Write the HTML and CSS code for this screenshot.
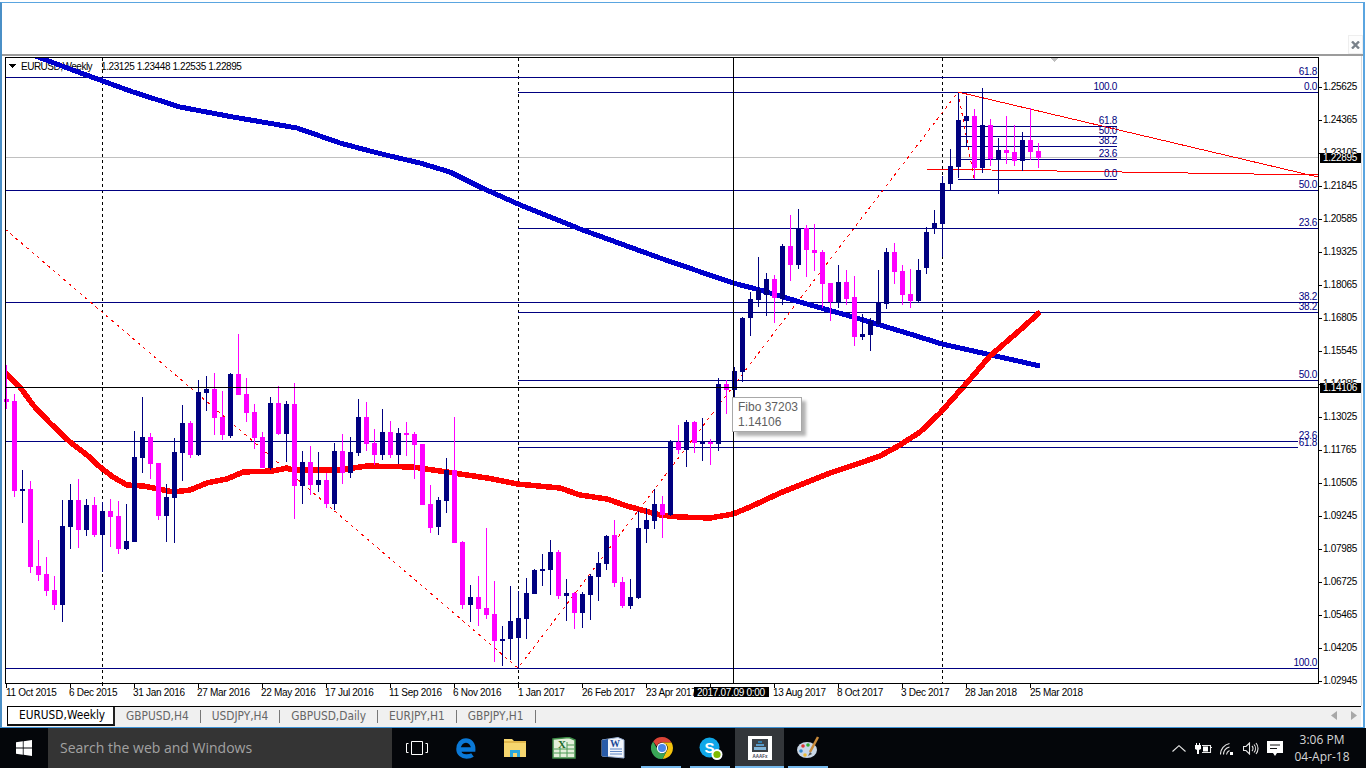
FILE: index.html
```html
<!DOCTYPE html>
<html lang="en">
<head>
<meta charset="utf-8">
<title>EURUSD,Weekly</title>
<link rel="stylesheet" href="styles.css">
</head>
<body>
<div class="app">
  <div class="mdi">
    <div class="mdi-head">
      <div class="close-box">
        <svg class="close-icon" width="9" height="8" viewBox="0 0 9 8"><path d="M1 .5L8 7.500M8 .5L1 7.500"/></svg>
      </div>
    </div>
    <div class="chart">
      <svg class="chart-svg" width="1361" height="652" viewBox="2 54 1361 652">
        <defs><clipPath id="plot"><rect x="6" y="58" width="1312" height="625"/></clipPath></defs>
        <rect class="band" x="2" y="53.5" width="1361" height="2"/>
        <rect class="edge" x="1361" y="56" width="1" height="650"/>

        <!-- horizontal and vertical objects, behind the bars -->
        <path class="bid" d="M5 157.5H1318"/>
        <path class="sep" d="M102.5 58V683M518.5 58V683M942.5 58V683"/>
        <path class="fib" d="M5 77.5H1318M518 92.5H1318M5 190.5H1318M518 228.5H1318M5 302.5H1318M518 312.5H1318M518 380.5H1318M5 441.5H1318M518 447.5H1318M5 668.5H1318M958 126.5H1117M958 136.5H1117M958 146.5H1117M958 159.5H1117M958 179.5H1117"/>
        <polygon class="mark" points="1050,58 1058,58 1054,62"/>
        <path class="trend-dash" d="M5 229L518 668L958 92L974 178"/>
        <path class="trend" d="M958 92L1318 177M926 169L1318 175"/>

        <!-- window title -->
        <polygon class="title-arrow" points="9,64 16,64 12.5,68"/>
        <text class="label title-name" x="21" y="70">EURUSD,Weekly</text>
        <text class="label title-quote" x="101" y="70">1.23125 1.23448 1.22535 1.22895</text>

        <!-- moving averages -->
        <g clip-path="url(#plot)">
          <polyline class="ma ma-blue" points="30,54 70,69 100,80 133,92 180,107 233,117 297,128 320,136 340,143 370,151 390,156 420,163 450,172 480,187 518,204 580,229 660,258 733,283 760,290 800,302 860,319 910,334 942,344 960,348 1040,366"/>
          <polyline class="ma ma-red" points="3,371 20,387 33,405 50,423 70,442 87,455 100,467 113,477 127,485 143,486 173,492 190,490 207,483 227,479 243,472 273,471 287,468 293,470 340,470 367,466 413,467 440,471 487,478 517,484 560,488 580,495 607,499 627,506 660,515 680,517 710,518 733,514 750,507 780,493 800,485 830,473 860,463 880,456 900,445 920,432 940,413 965,385 990,356 1020,330 1040,312"/>
        </g>

        <g id="candles"></g>

        <!-- fibonacci level labels -->
        <g class="fib-text">
          <text x="1317" y="75">61.8</text>
          <text x="1317" y="90">0.0</text>
          <text x="1317" y="188">50.0</text>
          <text x="1317" y="226">23.6</text>
          <text x="1317" y="300">38.2</text>
          <text x="1317" y="310">38.2</text>
          <text x="1317" y="378">50.0</text>
          <text x="1317" y="439">23.6</text>
          <rect class="label-bg" x="1298" y="439" width="20" height="9"/>
          <text x="1317" y="446">61.8</text>
          <text x="1317" y="666">100.0</text>
          <text x="1117" y="90">100.0</text>
          <text x="1117" y="124">61.8</text>
          <text x="1117" y="134">50.0</text>
          <text x="1117" y="144">38.2</text>
          <text x="1117" y="157">23.6</text>
          <text x="1117" y="177">0.0</text>
        </g>

        <!-- crosshair -->
        <path class="cross" d="M733.5 58V683M5 387.5H1318"/>

        <!-- frame and axes -->
        <path class="frame" d="M5.5 57.5H1318.5V683.5H5.5Z"/>
        <path class="frame" d="M1318 87.5h4M1318 120.5h4M1318 153.5h4M1318 186.5h4M1318 219.5h4M1318 252.5h4M1318 285.5h4M1318 318.5h4M1318 351.5h4M1318 384.5h4M1318 417.5h4M1318 450.5h4M1318 483.5h4M1318 516.5h4M1318 549.5h4M1318 582.5h4M1318 615.5h4M1318 648.5h4M1318 681.5h4"/>
        <path class="frame" d="M6.5 684v4M70.5 684v4M102.5 684v2M134.5 684v4M198.5 684v4M262.5 684v4M326.5 684v4M390.5 684v4M454.5 684v4M518.5 684v4M582.5 684v4M646.5 684v4M710.5 684v4M774.5 684v4M838.5 684v4M902.5 684v4M966.5 684v4M1030.5 684v4"/>

        <g class="label">
          <text x="1323" y="90">1.25625</text>
          <text x="1323" y="123">1.24365</text>
          <text x="1323" y="156">1.23105</text>
          <text x="1323" y="189">1.21845</text>
          <text x="1323" y="222">1.20585</text>
          <text x="1323" y="255">1.19325</text>
          <text x="1323" y="288">1.18065</text>
          <text x="1323" y="321">1.16805</text>
          <text x="1323" y="354">1.15545</text>
          <text x="1323" y="387">1.14285</text>
          <text x="1323" y="420">1.13025</text>
          <text x="1323" y="453">1.11765</text>
          <text x="1323" y="486">1.10505</text>
          <text x="1323" y="519">1.09245</text>
          <text x="1323" y="552">1.07985</text>
          <text x="1323" y="585">1.06725</text>
          <text x="1323" y="618">1.05465</text>
          <text x="1323" y="651">1.04205</text>
          <text x="1323" y="684">1.02945</text>

          <text x="6" y="696">11 Oct 2015</text>
          <text x="69" y="696">6 Dec 2015</text>
          <text x="133" y="696">31 Jan 2016</text>
          <text x="197" y="696">27 Mar 2016</text>
          <text x="261" y="696">22 May 2016</text>
          <text x="325" y="696">17 Jul 2016</text>
          <text x="389" y="696">11 Sep 2016</text>
          <text x="453" y="696">6 Nov 2016</text>
          <text x="518" y="696">1 Jan 2017</text>
          <text x="582" y="696">26 Feb 2017</text>
          <text x="646" y="696">23 Apr 2017</text>
          <text x="773" y="696">13 Aug 2017</text>
          <text x="837" y="696">8 Oct 2017</text>
          <text x="901" y="696">3 Dec 2017</text>
          <text x="965" y="696">28 Jan 2018</text>
          <text x="1030" y="696">25 Mar 2018</text>
        </g>

        <rect class="flag" x="1320" y="153" width="41" height="10"/>
        <text class="flag-text" x="1323" y="161">1.22895</text>
        <rect class="flag" x="1320" y="383" width="41" height="10"/>
        <text class="flag-text" x="1323" y="391">1.14106</text>
        <rect class="flag" x="694" y="687" width="75" height="10"/>
        <text class="flag-text" x="697" y="696">2017.07.09 0:00</text>
      </svg>
      <div class="tooltip">Fibo 37203<br>1.14106</div>
    </div>
    <div class="tabs">
      <div class="tab tab-active">EURUSD,Weekly</div>
      <div class="tab">GBPUSD,H4</div>
      <div class="tab">USDJPY,H4</div>
      <div class="tab">GBPUSD,Daily</div>
      <div class="tab">EURJPY,H1</div>
      <div class="tab">GBPJPY,H1</div>
      <div class="tab-arrows">
        <svg width="6" height="9" viewBox="0 0 6 9"><polygon class="tab-arrow" points="6,0 6,9 0,4.5"/></svg>
        <svg width="6" height="9" viewBox="0 0 6 9"><polygon class="tab-arrow" points="0,0 0,9 6,4.5"/></svg>
      </div>
    </div>
  </div>

  <div class="taskbar">
    <div class="start">
      <svg width="16" height="16" viewBox="0 0 16 16"><path class="white" d="M0 2.3L6.8 1.3V7.6H0ZM7.6 1.2L16 0V7.6H7.6ZM0 8.4H6.8V14.7L0 13.7ZM7.6 8.4H16V16L7.6 14.8Z"/></svg>
    </div>
    <div class="search">Search the web and Windows</div>
    <div class="apps">
      <div class="app-btn">
        <svg width="22" height="14" viewBox="0 0 22 14"><path class="outline" d="M5.5 .5H16.5V13.5H5.5ZM2.5 2.5H.5V11.5H2.5M19.500 2.500H21.500V11.500H19.500"/></svg>
      </div>
      <div class="app-btn">
        <svg width="20" height="21" viewBox="0 0 20 21"><path class="edge-e" d="M3 11.500H17.200C17.500 6 14 2.500 10 2.500C5.500 2.500 2.500 6.500 2.500 11C2.500 15.500 6 18.500 10.500 18.500C13 18.500 15 18 16.500 17"/></svg>
      </div>
      <div class="app-btn">
        <svg width="22" height="20" viewBox="0 0 22 20"><path class="folder-back" d="M0 1H8L10 3H22V19H0Z"/><rect class="folder-top" x="0" y="3" width="22" height="2"/><path class="folder-win" d="M6 12H16V19H13V15H9V19H6Z"/></svg>
      </div>
      <div class="app-btn">
        <svg width="24" height="22" viewBox="0 0 24 22"><path class="xl-paper" d="M1 2L17 .5L23 3V21H1Z"/><path class="xl-grid" d="M2 12H22M2 16H22M8 11V20M15 5V20M15 8H22"/><text class="tile-x" x="6" y="11">X</text></svg>
      </div>
      <div class="app-btn">
        <svg width="24" height="22" viewBox="0 0 24 22"><path class="wd-paper" d="M1 3L17 .5L23 3V21L1 19Z"/><path class="wd-tile" d="M1 3L7 2V20L1 19Z"/><path class="wd-lines" d="M9 12H21M9 14.500H21M9 17H21"/><text class="tile-w" x="9" y="10">W</text></svg>
      </div>
      <div class="app-btn app-run">
        <svg width="22" height="22" viewBox="0 0 22 22"><path class="ch-red" d="M11 0A11 11 0 0 1 20.500 5.500H11A5.500 5.500 0 0 0 5.800 9.300L2.200 4.400A11 11 0 0 1 11 0Z"/><path class="ch-yellow" d="M20.500 5.500A11 11 0 0 1 11.500 22L15.800 13.800A5.500 5.500 0 0 0 15.500 7.500L11 5.500Z"/><path class="ch-green" d="M2.200 4.400L6.500 12.500A5.500 5.500 0 0 0 11 16.500A5.500 5.500 0 0 0 15.800 13.800L11.500 22A11 11 0 0 1 2.200 4.400Z"/><circle class="white" cx="11" cy="11" r="5.200"/><circle class="ch-blue" cx="11" cy="11" r="4"/></svg>
      </div>
      <div class="app-btn app-run">
        <svg width="24" height="23" viewBox="0 0 24 23"><circle class="sk-blue" cx="10.500" cy="10.500" r="10"/><text class="sk-s" x="5.500" y="16">S</text><circle class="white" cx="18" cy="17.500" r="5.500"/><circle class="sk-green" cx="18" cy="17.500" r="3.600"/></svg>
      </div>
      <div class="app-btn app-run app-active">
        <svg width="24" height="24" viewBox="0 0 24 24"><rect class="white" width="24" height="24"/><rect class="aaa-dark" x="4" y="3" width="16" height="13"/><path class="aaa-bar1" d="M10 5H14V7H10Z"/><path class="aaa-bar2" d="M8 8H16V10H8Z"/><path class="aaa-bar3" d="M6 11H18V14H6Z"/><text class="aaa-text" x="12" y="21.500">AAAFx</text></svg>
      </div>
      <div class="app-btn app-run">
        <svg width="24" height="24" viewBox="0 0 24 24"><ellipse class="pal" cx="10" cy="14" rx="10" ry="8"/><circle class="pal-r" cx="6" cy="10" r="1.800"/><circle class="pal-g" cx="11" cy="9" r="1.800"/><circle class="pal-b" cx="4" cy="15" r="1.800"/><circle class="pal-y" cx="8" cy="19" r="1.800"/><path class="brush" d="M21 1L13 16"/><path class="brush-tip" d="M13 16L11 20L15 18Z"/></svg>
      </div>
    </div>
    <div class="tray">
      <div class="tray-item">
        <svg width="14" height="7" viewBox="0 0 14 7"><path class="tray-line" d="M.5 6.500L7 .700L13.500 6.500"/></svg>
      </div>
      <div class="tray-item">
        <svg width="17" height="11" viewBox="0 0 17 11"><path class="tray-line" d="M7 2.500H15.500V9.500H7M15.500 4.500H17"/><path class="white" d="M0 2H6V6L4 7V11H2V7L0 6ZM1 0H2V2H1ZM4 0H5V2H4ZM8 3.500H13V8.500H8Z"/></svg>
      </div>
      <div class="tray-item">
        <svg width="14" height="13" viewBox="0 0 14 13"><path class="tray-line" d="M.5 12.500A11 11 0 0 1 9.500 1.500M3.500 12.500A8 8 0 0 1 9.500 5M6.500 12.500A5 5 0 0 1 9.500 8.500"/><rect class="white" x="10" y="10" width="3" height="3"/></svg>
      </div>
      <div class="tray-item">
        <svg width="16" height="13" viewBox="0 0 16 13"><path class="tray-line" d="M.5 4.500H3L6.500 1V12L3 8.500H.5ZM9 4A3.500 3.500 0 0 1 9 9M11 2.500A6 6 0 0 1 11 10.500M13 1A8.500 8.500 0 0 1 13 12"/></svg>
      </div>
      <div class="tray-item">
        <svg width="16" height="15" viewBox="0 0 16 15"><path class="white" d="M0 0H16V12H10L8 15L6 12H0Z"/><path class="note-line" d="M3 4H13M3 7.500H10"/></svg>
      </div>
    </div>
    <div class="clock">3:06 PM<br>04-Apr-18</div>
  </div>
</div>
<script src="chart.js"></script>
</body>
</html>
```

FILE: styles.css
```css
* { box-sizing: border-box; }
html, body { margin: 0; padding: 0; }
body { background: #fff; overflow: hidden; font-family: "Liberation Sans", Arial, sans-serif; }
svg { display: block; }

.app { width: 1366px; height: 768px; display: flex; flex-direction: column; }

/* MDI client */
.mdi {
  height: 726px;
  margin: 2px 1px 0 0;
  border-top: 1px solid #5aa5e0;
  border-left: 2px solid #4a8fc6;
  border-right: 2px solid #5aa5e0;
  border-bottom: 1px solid #3f93d6;
  display: flex;
  flex-direction: column;
  background: #fff;
}
.mdi-head { height: 51px; flex: none; display: flex; justify-content: flex-end; align-items: flex-end; }
.close-box { width: 15px; height: 19px; padding-left: 2px; background: #fdfdfd; border: 1px solid #eee; display: flex; align-items: center; justify-content: flex-start; }
.close-icon path { stroke: #7a828a; stroke-width: 2.4; fill: none; }

/* Chart */
.chart { position: relative; height: 652px; flex: none; }
.chart-svg { shape-rendering: crispEdges; }
.chart-svg text { font-family: "Liberation Sans", Arial, sans-serif; font-size: 10px; letter-spacing: -.3px; }
.chart-svg .title-name { letter-spacing: -.5px; }
.chart-svg .title-quote { letter-spacing: -.4px; }
.band { fill: #9c9c9c; }
.edge { fill: #dcdcdc; }
.bid { stroke: #c0c0c0; fill: none; }
.sep { stroke: #000; stroke-dasharray: 3 3; fill: none; }
.fib { stroke: #000080; fill: none; }
.mark { fill: #c0c0c0; }
.trend-dash { stroke: #f00; stroke-dasharray: 3 4; fill: none; }
.trend { stroke: #f00; fill: none; }
.title-arrow { fill: #000; }
.label { fill: #000; }
.ma { fill: none; stroke-linejoin: round; }
.ma-blue { stroke: #0000cd; stroke-width: 5; }
.ma-red { stroke: #f00; stroke-width: 5.5; }
.bull { fill: #000080; }
.bear { fill: #f0f; }
.fib-text text { fill: #000080; text-anchor: end; }
.label-bg { fill: #fff; }
.cross { stroke: #000; fill: none; }
.frame { stroke: #000; fill: none; }
.flag { fill: #000; }
.flag-text { fill: #fff; }

.tooltip {
  position: absolute;
  left: 730px;
  top: 343px;
  width: 70px;
  height: 35px;
  padding: 2px 0 0 5px;
  background: #fff;
  border: 1px solid #a8a8a8;
  box-shadow: 4px 4px 3px rgba(0, 0, 0, .3);
  font-size: 12px;
  line-height: 15px;
  color: #5f5f5f;
}

/* Tabs */
.tabs {
  height: 21px;
  flex: none;
  display: flex;
  align-items: flex-start;
  margin-left: 5px;
  margin-right: 2px;
  border-top: 1px solid #000;
  background: #f0f0f0;
  font-family: "DejaVu Sans Condensed", "Liberation Sans", sans-serif;
  font-size: 11.8px;
  color: #666;
}
.tab { margin-top: 3px; padding: 0 11px; height: 13px; line-height: 13px; border-right: 1px solid #777; white-space: nowrap; }
.tab-active {
  margin-top: 0;
  height: 19px;
  line-height: 17px;
  width: 108px;
  padding: 0 0 0 11px;
  background: #fff;
  color: #000;
  border-left: 1px solid #000;
  border-right: 2px solid #222;
  border-bottom: 2px solid #111;
}
.tab-arrows { margin: 4px 4px 0 auto; display: flex; gap: 14px; }
.tab-arrow { fill: #a8a8a8; }

/* Taskbar */
.taskbar { height: 40px; flex: none; display: flex; background: #04060a; color: #fff; }
.start { width: 48px; flex: none; display: flex; align-items: center; justify-content: center; }
.white { fill: #fff; }
.search { width: 344px; flex: none; padding-left: 12px; background: #343434; color: #a2a2a2; font-family: "Open Sans", sans-serif; font-size: 14px; line-height: 40px; }
.apps { display: flex; flex: none; }
.app-btn { width: 49px; height: 40px; display: flex; align-items: center; justify-content: center; position: relative; }
.app-run::after { content: ""; position: absolute; left: 4px; right: 5px; bottom: 0; height: 2px; background: #76b9ed; }
.app-active { background: #33363a; }
.app-active::after { left: 0; right: 0; }

.outline { fill: none; stroke: #fff; }
.edge-e { fill: none; stroke: #0a78d6; stroke-width: 4.5; }
.folder-back { fill: #f6d66f; }
.folder-top { fill: #e2b84c; }
.folder-win { fill: #2aa9de; }
.xl-paper { fill: #e4efdb; stroke: #3f8d48; stroke-width: 1.500; }
.xl-grid { stroke: #4d9a55; fill: none; }
.tile-x { font: bold 11px "Liberation Serif", serif; fill: #1c6b2a; }
.wd-paper { fill: #f2f5fb; stroke: #9db3d6; }
.wd-tile { fill: #2a5ca8; }
.wd-lines { stroke: #5f86c4; fill: none; }
.tile-w { font: bold 10px "Liberation Serif", serif; fill: #1f4a96; }
.ch-red { fill: #db4437; }
.ch-yellow { fill: #f4c20d; }
.ch-green { fill: #3aa757; }
.ch-blue { fill: #4a86e8; }
.sk-blue { fill: #0fa7e8; }
.sk-s { font: bold 15px "Liberation Sans", sans-serif; fill: #fff; }
.sk-green { fill: #7fba00; }
.aaa-dark { fill: #3c4248; }
.aaa-bar1 { fill: #2f7fb0; }
.aaa-bar2 { fill: #5a9ac8; }
.aaa-bar3 { fill: #80b4d8; }
.aaa-text { font: bold 4.5px "Liberation Sans", sans-serif; fill: #445; text-anchor: middle; }
.pal { fill: #c9d6e6; }
.pal-r { fill: #d33; }
.pal-g { fill: #3a3; }
.pal-b { fill: #38c; }
.pal-y { fill: #eb3; }
.brush { stroke: #c98a3a; stroke-width: 2.5; fill: none; }
.brush-tip { fill: #555; }

.tray { margin-left: auto; display: flex; flex: none; }
.tray-item { width: 24px; height: 40px; display: flex; align-items: center; justify-content: center; }
.tray-line { fill: none; stroke: #e8e8e8; stroke-width: 1.1; }
.note-line { stroke: #111; stroke-width: 1; fill: none; }
.clock {
  width: 79px;
  padding-right: 9px;
  flex: none;
  text-align: center;
  font-family: "Open Sans", sans-serif;
  font-size: 12px;
  line-height: 17px;
  padding-top: 3px;
  color: #d6d6d6;
}
```

FILE: chart.js
```js
// Weekly OHLC bars: [bull?, wickTop, bodyTop, bodyBottom, wickBottom], read in 1/3 px from a base line.
var NS = "http://www.w3.org/2000/svg";
var segments = [
  [330, "m105,207,215,237 m192,213,483,500 b420,477,483,578 m453,477,710,728 m630,708,735,752 m681,732,783,797 m738,780,825,839 b510,588,825,875 b462,510,591,656 m447,510,600,654 b507,525,600,618 m501,525,615,621 b516,543,615,725 m507,543,561,651 m513,558,657,672 b522,633,657,660 b303,381,636,636 b201,321,384,429 m309,321,402,447 m399,399,558,570 b462,501,558,636 b324,366,504,639 b225,279,369,453 m273,279,375,384 b150,186,375,378 b138,177,189,243 m129,177,264,315 m183,261,315,330 b129,132,318,324 m12,132,195,195 m144,192,249,276 m222,246,324,357 m306,321,414,414 b201,219,414,420 m168,219,312,315 b213,222,312,396 m159,222,468,567 b363,396,468,522 m348,396,465,495 b366,450,465,486 m429,450,522,534 b339,363,522,540"],
  [380, "m162,213,279,312 b171,216,279,294 b57,111,219,228 m66,111,192,213 m147,189,225,255 b87,156,225,240 m123,156,225,234 b144,159,225,252 m126,159,165,228 m156,162,195,296 m192,192,375,375 m315,372,444,459 b351,360,441,465 b234,270,363,399 m111,270,489,489 m483,486,675,687 b615,651,675,726 m588,651,687,738 m444,684,705,717 m603,702,783,846 b738,777,783,858 b618,723,777,840 b633,714,774,865 b594,639,717,777 b567,570,642,642 b522,567,573,618 b480,516,570,645 m510,516,648,657 b597,639,648,723 m636,639,699,747 b636,642,699,744 b582,588,645,720 b516,549,591,663 b465,468,552,570 m420,465,609,621 m591,606,678,684 b597,651,678,687 b393,444,654,657 b384,420,447,489 b327,372,423,447 m348,372,405,474"],
  [340, "b300,306,525,528 m255,306,330,342 b240,246,330,381 m243,246,309,339 b234,306,309,363 m297,306,312,375 b114,132,312,333 m120,132,150,222 b81,93,150,171 b-69,-66,96,126"],
  [190, "b306,327,384,438 b201,300,330,351 b249,267,315,378 m255,267,324,399 b162,168,327,345 m75,168,225,273 b57,114,225,237 m105,114,180,261 m102,180,189,243 m180,186,282,354 m279,279,336,393 b225,276,339,354 m240,276,327,345 m258,321,441,468 b372,432,441,450 b384,393,435,483 b240,339,402,405 b174,186,342,357 m159,186,246,282 m225,243,315,345 m237,312,333,354 b207,240,333,336 b111,126,234,252 b60,99,117,132 b-42,-21,102,202"],
  [60, "b267,318,372,390 b98,180,321,354 b108,168,183,258 m147,168,324,357 b84,195,324,339 m177,195,297,318 b234,270,298,402 m168,270,279,312 m195,276,303,318 b216,240,303,333 m144,240,276,300 m249,273,294,324"]
];

function px(base, value) { return Math.round(base + value / 3); }
function bar(x, y, width, height, cls) {
  var r = document.createElementNS(NS, "rect");
  r.setAttribute("x", x);
  r.setAttribute("y", y);
  r.setAttribute("width", width);
  r.setAttribute("height", height);
  r.setAttribute("class", cls);
  return r;
}

var layer = document.getElementById("candles");
var index = 0;
segments.forEach(function (segment) {
  segment[1].split(" ").forEach(function (item) {
    var cls = item.charAt(0) === "b" ? "bull" : "bear";
    var v = item.slice(1).split(",").map(Number);
    var x = 6 + 8 * index++;
    var top = px(segment[0], v[0]), bodyTop = px(segment[0], v[1]);
    var bodyBottom = px(segment[0], v[2]), bottom = px(segment[0], v[3]);
    layer.appendChild(bar(x, top, 1, Math.max(bottom - top, 1), cls));
    layer.appendChild(bar(x - 2, bodyTop, 5, Math.max(bodyBottom - bodyTop, 2), cls));
  });
});
```
